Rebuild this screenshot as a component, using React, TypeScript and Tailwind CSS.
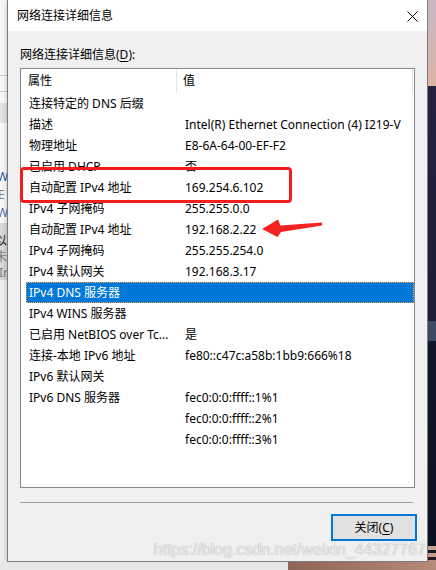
import React from "react";

const rows: [string, string][] = [
  ["连接特定的 DNS 后缀", ""],
  ["描述", "Intel(R) Ethernet Connection (4) I219-V"],
  ["物理地址", "E8-6A-64-00-EF-F2"],
  ["已启用 DHCP", "否"],
  ["自动配置 IPv4 地址", "169.254.6.102"],
  ["IPv4 子网掩码", "255.255.0.0"],
  ["自动配置 IPv4 地址", "192.168.2.22"],
  ["IPv4 子网掩码", "255.255.254.0"],
  ["IPv4 默认网关", "192.168.3.17"],
  ["IPv4 DNS 服务器", ""],
  ["IPv4 WINS 服务器", ""],
  ["已启用 NetBIOS over Tc...", "是"],
  ["连接-本地 IPv6 地址", "fe80::c47c:a58b:1bb9:666%18"],
  ["IPv6 默认网关", ""],
  ["IPv6 DNS 服务器", "fec0:0:0:ffff::1%1"],
  ["", "fec0:0:0:ffff::2%1"],
  ["", "fec0:0:0:ffff::3%1"],
];

function LeftStrip() {
  return (
    <div className="w-[7px] h-full flex flex-col overflow-hidden bg-[#f0f0f0] font-['Noto_Sans','Noto_Sans_CJK_SC',sans-serif] text-[12px] leading-[18px]">
      <div className="h-[75px] bg-[#f9f9f9]" />
      <div className="h-px bg-[#d4d4d4]" />
      <div className="h-[15px] bg-[#f9f9f9]" />
      <div className="h-px bg-[#d4d4d4]" />
      <div className="h-[11px] bg-[#f9f9f9]" />
      <div className="h-[20px] bg-[#e4e4e4]" />
      <div className="h-[100px] bg-[#fafafa] flex flex-col pt-[45px]">
        <span className="ml-[-3px] text-[#1a56b0] whitespace-nowrap">W</span>
        <span className="ml-[-2px] text-[#808080] whitespace-nowrap">E</span>
        <span className="ml-[-3px] text-[#4a6fb0] whitespace-nowrap">W</span>
      </div>
      <div className="h-[57px] bg-[#d9d9d9] flex flex-col pt-[10px] leading-[16px]">
        <span className="ml-[-5px] text-[#202020] whitespace-nowrap">以</span>
        <span className="ml-[-5px] text-[#808080] whitespace-nowrap">未</span>
        <span className="ml-[-1px] text-[#808080] whitespace-nowrap">Ir</span>
      </div>
      <div className="flex-1 bg-[#f0f0f0]" />
    </div>
  );
}

function RightStrip() {
  return (
    <div className="w-[8px] h-full flex flex-col overflow-hidden">
      <div className="h-[86px] bg-gradient-to-b from-[#c7b7c4] to-[#dbb3a2]" />
      <div className="h-[235px] bg-gradient-to-b from-[#24223f] to-[#1c1c36]" />
      <div className="h-[20px] bg-[#3c4a68]" />
      <div className="h-[205px] bg-gradient-to-b from-[#10172b] to-[#0b1020]" />
      <div className="h-[4px] bg-[#c9a293]" />
      <div className="h-[3px] bg-[#1a1a24]" />
      <div className="h-[4px] bg-[#c89d8d]" />
      <div className="h-[3px] bg-[#221a20]" />
      <div className="flex-1 bg-[#b88a7c]" />
    </div>
  );
}

function Dialog() {
  return (
    <div className="w-[421px] h-full flex flex-col border-l border-r border-b border-[#7c7c7c] bg-[#f0f0f0] font-['Noto_Sans','Noto_Sans_CJK_SC',sans-serif] text-[12px] text-black shadow-[0_2px_6px_rgba(0,0,0,0.25)]">
      <div className="h-[31px] bg-white flex items-center justify-between pl-[9px] pr-[9px]">
        <span className="leading-[16px] text-[12px]">网络连接详细信息</span>
        <svg width="11" height="11" viewBox="0 0 11 11" className="mt-[1px]">
          <path d="M0.5 0.5 L10.5 10.5 M10.5 0.5 L0.5 10.5" stroke="#000" strokeWidth="1" fill="none" />
        </svg>
      </div>
      <div className="flex-1 flex flex-col px-[12px]">
        <div className="pt-[16px] h-[32px] leading-[16px]">
          网络连接详细信息(<span className="underline underline-offset-2">D</span>):
        </div>
        <div className="mt-[5px] h-[420px] border border-[#828790] bg-white flex flex-col">
          <div className="h-[24px] flex items-stretch">
            <div className="w-[156px] pl-[7px] flex items-center border-r border-[#e5e5e5]">属性</div>
            <div className="w-[236px] pl-[6px] flex items-center border-r border-[#e5e5e5]">值</div>
          </div>
          {rows.map(([k, v], i) => {
            const sel = i === 9;
            return (
              <div
                key={i}
                className={
                  sel
                    ? "h-[21px] ml-[5px] flex items-center bg-[#0078d7] text-white border border-dotted border-[#ffa040]"
                    : "h-[21px] ml-[5px] flex items-center border border-transparent"
                }
              >
                <div className="w-[158px] pl-[2px] whitespace-nowrap overflow-hidden">{k}</div>
                <div className="flex-1 whitespace-nowrap overflow-hidden">{v}</div>
              </div>
            );
          })}
        </div>
        <div className="mt-[14px] h-px mr-[2px] bg-[#a0a0a0]" />
        <div className="mt-[11px] flex justify-end mr-[-2px]">
          <button className="w-[86px] h-[27px] border-2 border-[#0078d7] bg-[#e1e1e1] flex items-center justify-center text-[12px] leading-[16px]">
            关闭(<span className="underline underline-offset-2">C</span>)
          </button>
        </div>
      </div>
    </div>
  );
}

export default function App() {
  return (
    <div className="relative w-[436px] h-[570px] overflow-hidden flex flex-col bg-[#e8e8e8]">
      <div className="flex h-[562px]">
        <LeftStrip />
        <Dialog />
        <RightStrip />
      </div>
      <div className="flex h-[8px]">
        <div className="w-[288px] bg-[#e7e7e7]" />
        <div className="flex-1 bg-gradient-to-r from-[#8d6457] to-[#b58a7b]" />
      </div>

      {/* red annotation box */}
      <div className="absolute left-[20px] top-[167px] w-[272px] h-[36px] border-[3px] border-[#f41c1c] rounded-[4px]" />

      {/* red arrow */}
      <svg className="absolute left-[258px] top-[215px]" width="68" height="26" viewBox="258 215 68 26">
        <path
          d="M262 229 L278 219.5 L280.5 225.5 L322 222.5 L322 225.5 L281 232 L277.5 237 Z"
          fill="#f52222"
        />
      </svg>

      {/* watermark */}
      <div className="absolute right-[10px] top-[540px] font-['Liberation_Sans',sans-serif] text-[16px] leading-[20px] text-white/80 [text-shadow:0_0_1px_rgba(0,0,0,0.45)] whitespace-nowrap">
        https://blog.csdn.net/weixin_44327767
      </div>
    </div>
  );
}
